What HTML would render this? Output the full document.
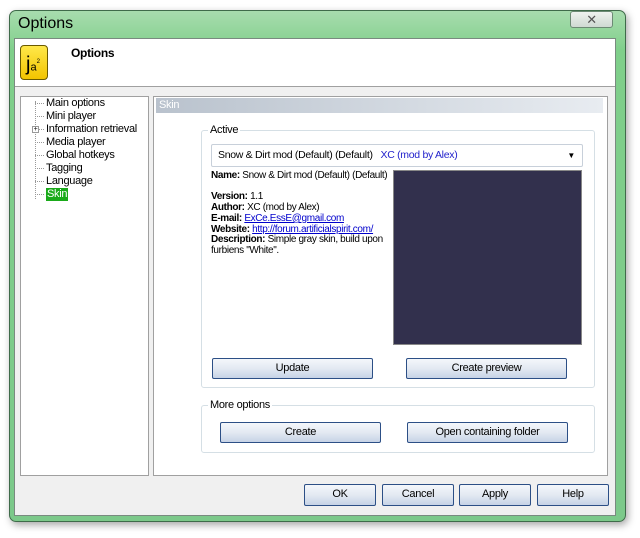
<!DOCTYPE html>
<html><head><style>
*{margin:0;padding:0;box-sizing:border-box}
body{width:640px;height:538px;background:#fff;font-family:"Liberation Sans",sans-serif;font-size:11px;color:#000;position:relative;overflow:hidden;letter-spacing:-0.3px}
.a{position:absolute}
.frame{left:9px;top:10px;width:617px;height:512px;border:1px solid #3f6b4a;border-radius:7px;background:linear-gradient(180deg,#a8dcae 0,#7fcf8a 40px,#7cc98a 100%);box-shadow:2px 3px 8px rgba(0,0,0,.35)}
.btn{position:absolute;border:1px solid #2c4f86;border-radius:2px;background:linear-gradient(#f4f7fb,#e3e9f2 50%,#c6d3e6);text-align:center;line-height:19px;font-size:11px}
.grp{position:absolute;border:1px solid #d5dfe5;border-radius:3px}
.lg{position:absolute;top:-7px;left:6px;background:#fff;padding:0 2px}
.tree div{position:absolute;left:26px;height:13px;line-height:13px;top:0}
.tree i{position:absolute;left:15px;width:9px;border-top:1px dotted #999}
b{font-weight:bold}
a{color:#00c;text-decoration:underline}
.info{font-size:10px;letter-spacing:-0.35px;line-height:10.7px;white-space:nowrap}
</style></head><body>
<div class="a frame"></div>
<div class="a" style="left:18px;top:15px;font-size:16px;color:#000;letter-spacing:0">Options</div>
<div class="a" style="left:570px;top:11px;width:43px;height:17px;border:1px solid #6c8a74;border-radius:3px;background:linear-gradient(#eef3ef,#cfd9d2);text-align:center;font-size:13px;line-height:15px;color:#555">✕</div>
<div class="a" style="left:14px;top:38px;width:602px;height:478px;background:#f0f0f0;border:1px solid #7a8a80"></div>
<div class="a" style="left:15px;top:39px;width:600px;height:48px;background:#fff;border-bottom:1px solid #a0a0a0"></div>
<div class="a" style="left:20px;top:45px;width:28px;height:35px;background:linear-gradient(#ffe84a,#f2c400);border:1px solid #6a5a00;border-radius:4px;font-size:20px;line-height:33px;padding-left:5px;letter-spacing:0">j<span style="font-size:11px">a</span><sup style="font-size:6px">2</sup></div>
<div class="a" style="left:71px;top:46px;font-size:12px;font-weight:bold">Options</div>
<div class="a" style="left:20px;top:96px;width:129px;height:380px;background:#fff;border:1px solid #a0a0a0"></div>
<div class="a tree" style="left:20px;top:97px;width:129px;height:120px">
<span class="a" style="left:15px;top:4px;height:98px;border-left:1px dotted #999"></span>
<i style="top:6px"></i><i style="top:19px"></i><i style="top:32px"></i><i style="top:45px"></i><i style="top:58px"></i><i style="top:71px"></i><i style="top:84px"></i><i style="top:97px"></i>
<div style="top:0">Main options</div><div style="top:13px">Mini player</div><div style="top:26px">Information retrieval</div><div style="top:39px">Media player</div><div style="top:52px">Global hotkeys</div><div style="top:65px">Tagging</div><div style="top:78px">Language</div><div style="top:91px;background:#1aaa1a;color:#fff;padding:0 1px;left:26px">Skin</div>
<span class="a" style="left:12px;top:29px;width:7px;height:7px;border:1px solid #999;background:#fff;font-size:7px;line-height:5px;text-align:center">+</span>
</div>
<div class="a" style="left:153px;top:96px;width:455px;height:380px;background:#fff;border:1px solid #a0a0a0"></div>
<div class="a" style="left:156px;top:98px;width:447px;height:15px;background:linear-gradient(90deg,#b9c2cd,#e8ecf1);color:#fff;padding-left:3px;line-height:15px">Skin</div>
<div class="grp" style="left:201px;top:130px;width:394px;height:258px"><span class="lg">Active</span></div>
<div class="a" style="left:211px;top:144px;width:372px;height:23px;border:1px solid #c8d0da;border-radius:2px;line-height:21px;padding-left:6px;font-size:10.5px">Snow &amp; Dirt mod (Default) (Default) &nbsp;&nbsp;<span style="color:#22c">XC (mod by Alex)</span><span class="a" style="right:7px;top:0;font-size:8px">▼</span></div>
<div class="a info" style="left:211px;top:171px;width:180px">
<b>Name:</b> Snow &amp; Dirt mod (Default) (Default)<br><br><b>Version:</b> 1.1<br><b>Author:</b> XC (mod by Alex)<br><b>E-mail:</b> <a>ExCe.EssE@gmail.com</a><br><b>Website:</b> <a>http://forum.artificialspirit.com/</a><br><b>Description:</b> Simple gray skin, build upon<br>furbiens "White".</div>
<div class="a" style="left:393px;top:170px;width:189px;height:175px;background:#32304d;border:1px solid #888"></div>
<div class="btn" style="left:212px;top:358px;width:161px;height:21px">Update</div>
<div class="btn" style="left:406px;top:358px;width:161px;height:21px">Create preview</div>
<div class="grp" style="left:201px;top:405px;width:394px;height:48px"><span class="lg">More options</span></div>
<div class="btn" style="left:220px;top:422px;width:161px;height:21px">Create</div>
<div class="btn" style="left:407px;top:422px;width:161px;height:21px">Open containing folder</div>
<div class="btn" style="left:304px;top:484px;width:72px;height:22px">OK</div>
<div class="btn" style="left:382px;top:484px;width:72px;height:22px">Cancel</div>
<div class="btn" style="left:459px;top:484px;width:72px;height:22px">Apply</div>
<div class="btn" style="left:537px;top:484px;width:72px;height:22px">Help</div>
</body></html>
